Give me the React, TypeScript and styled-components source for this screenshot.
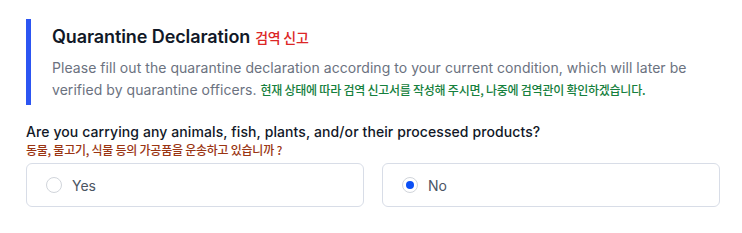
import { useState } from 'react';
import styled, { createGlobalStyle } from 'styled-components';

const GlobalStyle = createGlobalStyle`
    body {
        margin: 0;
        background: #ffffff;
        font-family: Inter, "Noto Sans CJK KR", sans-serif;
        -webkit-font-smoothing: antialiased;
    }
`;

const Page = styled.div`
    padding: 19px 22px 0 26px;
    width: 694px;
`;

const Header = styled.section`
    border-left: 5px solid #2c55f2;
    padding: 5px 0 4px 21px;
`;

const Title = styled.h1`
    margin: 0;
    display: flex;
    align-items: baseline;
    gap: 5px;
    font-size: 18px;
    line-height: 26px;
    font-weight: 600;
    letter-spacing: -0.1px;
    color: #111827;
`;

const Ko = styled.span<{ $color: string; $size?: number }>`
    font-family: "Noto Sans CJK KR", sans-serif;
    font-size: ${(p) => p.$size ?? 12}px;
    line-height: 1;
    font-weight: 500;
    color: ${(p) => p.$color};
    letter-spacing: -0.25px;
`;

const Description = styled.p`
    margin: 7px 0 0;
    font-size: 14px;
    line-height: 22px;
    color: #6b7280;
    letter-spacing: 0.05px;
`;

const Question = styled.div`
    margin-top: 17px;
    font-size: 14px;
    line-height: 20px;
    font-weight: 500;
    letter-spacing: 0.1px;
    color: #111827;
`;

const QuestionKo = styled.div`
    margin-top: -1px;
    line-height: 16px;
`;

const Options = styled.div`
    margin-top: 6px;
    display: grid;
    grid-template-columns: 1fr 1fr;
    gap: 18px;
`;

const Option = styled.label`
    height: 44px;
    box-sizing: border-box;
    display: flex;
    align-items: center;
    gap: 10px;
    padding-left: 19px;
    border: 1px solid #d8dde7;
    border-radius: 6px;
    font-size: 14px;
    color: #4b5563;
    cursor: pointer;
`;

const Radio = styled.span<{ $checked: boolean }>`
    width: 16px;
    height: 16px;
    box-sizing: border-box;
    border-radius: 50%;
    border: 1px solid #d1d5db;
    background: #ffffff;
    display: flex;
    align-items: center;
    justify-content: center;
    &::after {
        content: '';
        width: 8px;
        height: 8px;
        border-radius: 50%;
        background: ${(p) => (p.$checked ? '#0b4ff5' : 'transparent')};
    }
`;

export default function App() {
    const [value, setValue] = useState('no');
    return (
        <Page>
            <GlobalStyle />
            <Header>
                <Title>
                    Quarantine Declaration
                    <Ko $color="#dc2626" $size={14}>검역 신고</Ko>
                </Title>
                <Description>
                    Please fill out the quarantine declaration according to your current condition, which will later be
                    verified by quarantine officers.{' '}
                    <Ko $color="#15803d">현재 상태에 따라 검역 신고서를 작성해 주시면, 나중에 검역관이 확인하겠습니다.</Ko>
                </Description>
            </Header>
            <Question>Are you carrying any animals, fish, plants, and/or their processed products?</Question>
            <QuestionKo>
                <Ko $color="#9a3412">동물, 물고기, 식물 등의 가공품을 운송하고 있습니까 ?</Ko>
            </QuestionKo>
            <Options>
                <Option onClick={() => setValue('yes')}>
                    <Radio $checked={value === 'yes'} />
                    Yes
                </Option>
                <Option onClick={() => setValue('no')}>
                    <Radio $checked={value === 'no'} />
                    No
                </Option>
            </Options>
        </Page>
    );
}
